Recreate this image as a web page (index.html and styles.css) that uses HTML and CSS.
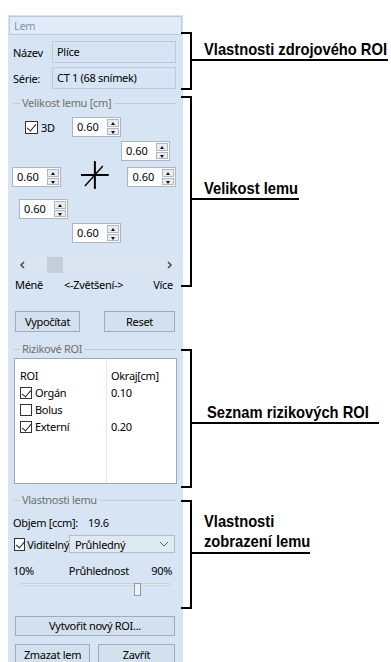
FILE: index.html
```html
<!DOCTYPE html>
<html>
<head lang="cs">
    <meta charset="UTF-8">
    <title>Lem</title>
    <link rel="stylesheet" href="styles.css">
</head>
<body>
<div id="page">
    <div id="panel">
        <div class="title">Lem</div>
        <div class="inner">
            <div class="field-row first">
                <span class="field-label">Název</span>
                <span class="field">Plíce</span>
            </div>
            <div class="field-row">
                <span class="field-label">Série:</span>
                <span class="field">CT 1 (68 snímek)</span>
            </div>

            <div class="legend size"><span>Velikost lemu [cm]</span></div>
            <div class="spin-row r1">
                <label class="check check-3d"><i class="box on"></i>3D</label>
                <span class="spin"><span class="val">0.60</span><span class="arrows"><b class="up"></b><b class="down"></b></span></span>
            </div>
            <div class="spin-row r2">
                <span class="spin"><span class="val">0.60</span><span class="arrows"><b class="up"></b><b class="down"></b></span></span>
            </div>
            <div class="spin-row r3">
                <span class="spin"><span class="val">0.60</span><span class="arrows"><b class="up"></b><b class="down"></b></span></span>
                <svg class="cross" width="30" height="30" viewBox="0 0 30 30">
                    <path d="M1 15H29" stroke="#000" stroke-width="2"/>
                    <path d="M15 1V29" stroke="#000" stroke-width="2"/>
                    <path d="M23 6L5 26" stroke="#000" stroke-width="1.4"/>
                </svg>
                <span class="spin"><span class="val">0.60</span><span class="arrows"><b class="up"></b><b class="down"></b></span></span>
            </div>
            <div class="spin-row r4">
                <span class="spin"><span class="val">0.60</span><span class="arrows"><b class="up"></b><b class="down"></b></span></span>
            </div>
            <div class="spin-row r5">
                <span class="spin"><span class="val">0.60</span><span class="arrows"><b class="up"></b><b class="down"></b></span></span>
            </div>

            <div class="scrollbar">
                <svg width="12" height="16" viewBox="0 0 12 16"><path d="M7 5L4 8L7 11" fill="none" stroke="#444" stroke-width="1.5"/></svg>
                <div class="track"><span class="thumb"></span></div>
                <svg width="12" height="16" viewBox="0 0 12 16"><path d="M5 5L8 8L5 11" fill="none" stroke="#444" stroke-width="1.5"/></svg>
            </div>
            <div class="zoom-labels">
                <span>Méně</span>
                <span class="mid">&lt;-Zvětšení-&gt;</span>
                <span class="more">Více</span>
            </div>

            <div class="btn-row calc">
                <span class="btn b-calc">Vypočítat</span>
                <span class="btn b-reset">Reset</span>
            </div>

            <div class="legend"><span>Rizikové ROI</span></div>
            <div class="list">
                <div class="col col-roi">
                    <div class="cell head">ROI</div>
                    <div class="cell"><label class="check"><i class="box on"></i>Orgán</label></div>
                    <div class="cell"><label class="check"><i class="box"></i>Bolus</label></div>
                    <div class="cell"><label class="check"><i class="box on"></i>Externí</label></div>
                </div>
                <div class="col col-val">
                    <div class="cell head">Okraj[cm]</div>
                    <div class="cell">0.10</div>
                    <div class="cell"></div>
                    <div class="cell">0.20</div>
                </div>
            </div>

            <div class="legend"><span>Vlastnosti lemu</span></div>
            <div class="volume"><span class="vol-label">Objem [ccm]:</span><span>19.6</span></div>
            <div class="visible-row">
                <label class="check check-vis"><i class="box on"></i>Viditelný</label>
                <span class="combo">Průhledný
                    <svg width="10" height="6" viewBox="0 0 10 6"><path d="M1 1L5 5L9 1" fill="none" stroke="#666" stroke-width="1"/></svg>
                </span>
            </div>
            <div class="percent">
                <span>10%</span>
                <span class="p-mid">Průhlednost</span>
                <span class="p-end">90%</span>
            </div>
            <div class="slider"><span class="groove"></span><span class="knob"></span></div>

            <div class="btn-row new"><span class="btn b-new">Vytvořit nový ROI...</span></div>
            <div class="btn-row last">
                <span class="btn b-del">Zmazat lem</span>
                <span class="btn b-close">Zavřít</span>
            </div>
        </div>
    </div>

    <div id="notes">
        <div class="note n1">
            <div class="bracket"></div>
            <div class="note-label"><span>Vlastnosti zdrojového ROI</span></div>
        </div>
        <div class="note n2">
            <div class="bracket"></div>
            <div class="note-label"><span>Velikost lemu</span></div>
        </div>
        <div class="note n3">
            <div class="bracket"></div>
            <div class="note-label"><span>Seznam rizikových ROI</span></div>
        </div>
        <div class="note n4">
            <div class="bracket"></div>
            <div class="note-label"><span>Vlastnosti<br>zobrazení lemu</span></div>
        </div>
    </div>
</div>
</body>
</html>
```

FILE: styles.css
```css
*{
    margin: 0;
    padding: 0;
    box-sizing: border-box;
}
body{
    background: #fff;
    font-family: "Noto Sans", "Liberation Sans", sans-serif;
    font-size: 11px;
    letter-spacing: -0.3px;
    color: #000;
}
#page{
    display: flex;
    align-items: flex-start;
    height: 662px;
    overflow: hidden;
}

/* panel */
#panel{
    width: 175px;
    height: 647px;
    margin: 15px 0 0 8px;
    padding: 1px 1px 0;
    background: #d6e4f3;
}
.title{
    height: 19px;
    line-height: 17px;
    padding-left: 4px;
    border: 1px solid #b7c9dd;
    background: #e1ebf7;
    color: #7894b8;
}
.inner{
    padding: 0 6px 0 4px;
}
.field-row{
    display: flex;
    align-items: center;
    margin-top: 4px;
}
.field-row.first{
    margin-top: 6px;
}
.field-label{
    width: 39px;
}
.field{
    flex: 1;
    height: 22px;
    line-height: 20px;
    padding-left: 4px;
    border: 1px solid #bccbdc;
}

/* group headers */
.legend{
    display: flex;
    align-items: center;
    height: 14px;
    color: #707070;
}
.legend.size{
    margin-top: 7px;
}
.legend:before,
.legend:after{
    content: "";
    height: 1px;
    background: #bfcbd8;
}
.legend:before{
    width: 7px;
    margin-right: 2px;
}
.legend:after{
    flex: 1;
    margin-left: 3px;
}
.legend span{
    line-height: 14px;
}

/* checkboxes */
.check{
    display: flex;
    align-items: center;
}
.box{
    width: 13px;
    height: 13px;
    margin-right: 3px;
    border: 1px solid #333;
    background: #fff;
    position: relative;
}
.box.on:after{
    content: "";
    position: absolute;
    left: 3px;
    top: 0;
    width: 4px;
    height: 8px;
    border: solid #222;
    border-width: 0 1.5px 1.5px 0;
    transform: rotate(40deg);
}

/* spin boxes */
.legend + .spin-row{
    margin-top: 7px;
}
.spin-row{
    display: flex;
    align-items: center;
    height: 20px;
}
.r1{ padding-left: 12px; }
.check-3d{ width: 47px; }
.r2{ margin-top: 4px; padding-left: 108px; }
.r3{ margin-top: 6px; margin-left: -1px; }
.r4{ margin-top: 12px; padding-left: 6px; }
.r5{ margin-top: 4px; padding-left: 59px; }
.spin{
    display: flex;
    width: 49px;
    height: 20px;
    border: 1px solid #aab6c3;
    background: #fff;
}
.spin .val{
    flex: 1;
    line-height: 18px;
    padding-left: 4px;
    letter-spacing: 0;
}
.arrows{
    display: flex;
    flex-direction: column;
    width: 12px;
    margin: 1px 1px 1px 0;
}
.arrows b{
    flex: 1;
    border: 1px solid #aeb8c3;
    background: #e9ecf0;
    position: relative;
}
.arrows b + b{
    margin-top: 1px;
}
.arrows b:after{
    content: "";
    position: absolute;
    left: 3px;
    border-left: 2px solid transparent;
    border-right: 2px solid transparent;
}
.arrows .up:after{
    top: 2px;
    border-bottom: 3px solid #111;
}
.arrows .down:after{
    top: 2px;
    border-top: 3px solid #111;
}
.cross{
    margin: -5px 18px 0 19px;
}

/* scrollbar */
.scrollbar{
    display: flex;
    align-items: center;
    height: 16px;
    margin: 14px -1px 0 1px;
    background: #dae5f1;
}
.scrollbar svg{
    margin: 0 2px 0 3px;
}
.track{
    flex: 1;
    height: 16px;
}
.thumb{
    display: block;
    width: 16px;
    height: 16px;
    margin-left: 16px;
    background: #c5cdd8;
}
.zoom-labels{
    display: flex;
    margin-top: 5px;
    padding: 0 3px 0 2px;
    line-height: 14px;
}
.zoom-labels .mid{
    margin-left: 21px;
}
.zoom-labels .more{
    margin-left: auto;
}

/* buttons */
.btn-row{
    display: flex;
    margin: 22px 1px 0 2px;
}
.btn-row.calc{
    margin-top: 19px;
    justify-content: space-between;
}
.btn-row.new{
    margin-top: 20px;
}
.btn-row.last{
    margin-top: 8px;
}
.btn{
    height: 21px;
    line-height: 19px;
    text-align: center;
    border: 1px solid #9eacbc;
    background: #d3e0ee;
}
.b-calc{ width: 65px; }
.b-reset{ width: 71px; }
.b-new{ width: 160px; height: 20px; line-height: 18px; }
.b-del{ width: 75px; }
.b-close{ width: 77px; margin-left: 8px; }

/* risk list */
.calc + .legend{
    margin-top: 10px;
}
.list{
    display: flex;
    height: 126px;
    margin: 2px -1px 0 1px;
    padding-top: 9px;
    border: 1px solid #a0a9b3;
    background: #fff;
}
.col-roi{
    width: 92px;
    padding-left: 5px;
    border-right: 1px solid #e3e6ea;
    margin-top: -9px;
    padding-top: 9px;
}
.col-val{
    padding-left: 4px;
}
.cell{
    height: 17px;
    line-height: 17px;
}
.cell.head{
    height: 16px;
    line-height: 16px;
}
.cell .box{
    width: 12px;
    height: 12px;
}

/* display properties */
.list + .legend{
    margin-top: 9px;
}
.volume{
    display: flex;
    margin-top: 9px;
    line-height: 14px;
}
.vol-label{
    width: 75px;
}
.visible-row{
    display: flex;
    align-items: center;
    margin-top: 5px;
    margin-left: 1px;
}
.check-vis{
    width: 55px;
}
.check-vis .box{
    margin-right: 2px;
}
.combo{
    display: flex;
    align-items: center;
    justify-content: space-between;
    width: 106px;
    height: 18px;
    padding: 0 5px 0 5px;
    border: 1px solid #aebdcc;
    background: #dfe9f4;
}
.percent{
    display: flex;
    margin-top: 11px;
    line-height: 14px;
    padding-right: 4px;
}
.p-mid{
    margin-left: 35px;
}
.p-end{
    margin-left: auto;
}
.slider{
    height: 13px;
    margin: 2px 6px 0 7px;
    position: relative;
}
.groove{
    display: block;
    height: 3px;
    margin-top: 5px;
    border: 1px solid #c9d2dc;
    background: #e4eaf1;
}
.knob{
    position: absolute;
    left: 114px;
    top: 0;
    width: 7px;
    height: 13px;
    border: 1px solid #8e9aa6;
    background: #eef1f4;
}

/* annotations */
#notes{
    margin: 32px 0 0 -2px;
    font-family: "Liberation Sans", Arial, sans-serif;
    font-weight: bold;
    font-size: 17px;
    letter-spacing: 0;
}
.note{
    display: flex;
    align-items: flex-start;
}
.bracket{
    align-self: stretch;
    width: 11px;
    border: 2px solid #000;
    border-left: none;
}
.note-label{
    margin-left: -2px;
    padding-left: 14px;
    border-bottom: 2px solid #000;
    line-height: 18px;
    white-space: nowrap;
    overflow: hidden;
}
.note-label span{
    display: inline-block;
    vertical-align: top;
    transform: scaleX(0.865);
    transform-origin: left;
}
.n1{ height: 58px; }
.n1 .note-label{ margin-top: 9px; width: 198px; }
.n2{ height: 191px; margin-top: 6px; }
.n2 .note-label{ margin-top: 84px; width: 109px; }
.n3{ height: 139px; margin-top: 62px; }
.n3 .note-label{ margin-top: 55px; width: 189px; padding-left: 17px; }
.n4{ height: 109px; margin-top: 12px; }
.n4 .note-label{ margin-top: 12px; width: 120px; line-height: 20px; }
```
